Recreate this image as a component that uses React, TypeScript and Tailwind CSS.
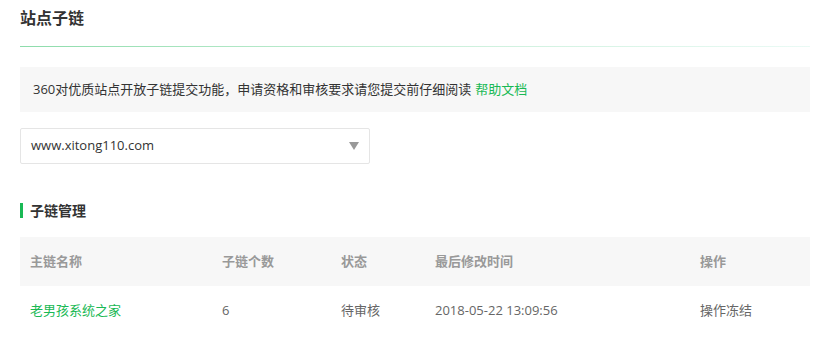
import React from "react";

export default function App() {
  const font = { fontFamily: '"Open Sans", "Noto Sans CJK SC", sans-serif' };
  return (
    <div className="w-[831px] h-[354px] bg-white overflow-hidden" style={font}>
      <div className="ml-[20px] w-[790px]">
        <div className="h-[46px] pt-[6px] text-[16px] font-bold text-[#333] leading-[24px]">站点子链</div>
        <div className="h-px bg-gradient-to-r from-[#8ddcab] via-[#c9efd9] to-[#eafaf5]" />
        <div className="mt-[20px] h-[45px] bg-[#f7f7f7] flex items-center pl-[13px] text-[13px] text-[#333]">
          360对优质站点开放子链提交功能，申请资格和审核要求请您提交前仔细阅读
          <span className="ml-[4px] text-[#19b955]">帮助文档</span>
        </div>
        <div className="mt-[16px] w-[350px] h-[36px] border border-[#e5e5e5] rounded-[2px] flex items-center justify-between pl-[10px] pr-[10px] text-[13px] text-[#333]">
          <span>www.xitong110.com</span>
          <svg width="10" height="8" viewBox="0 0 10 8">
            <path d="M0 0 L10 0 L5 8 Z" fill="#999" />
          </svg>
        </div>
        <div className="mt-[39px] flex items-center h-[15px]">
          <div className="w-[3px] h-[15px] bg-[#19b955]" />
          <span className="ml-[7px] text-[14px] font-bold text-[#333] leading-none">子链管理</span>
        </div>
        <div className="mt-[19px]">
          <div className="h-[49px] bg-[#f7f7f7] flex items-center text-[13px] font-bold text-[#999]">
            <div className="w-[202px] pl-[10px]">主链名称</div>
            <div className="w-[119px]">子链个数</div>
            <div className="w-[94px]">状态</div>
            <div className="w-[265px]">最后修改时间</div>
            <div>操作</div>
          </div>
          <div className="h-[49px] flex items-center text-[13px] text-[#666]">
            <div className="w-[202px] pl-[10px] text-[#19b955]">老男孩系统之家</div>
            <div className="w-[119px]">6</div>
            <div className="w-[94px]">待审核</div>
            <div className="w-[265px]">2018-05-22 13:09:56</div>
            <div>操作冻结</div>
          </div>
        </div>
      </div>
    </div>
  );
}
